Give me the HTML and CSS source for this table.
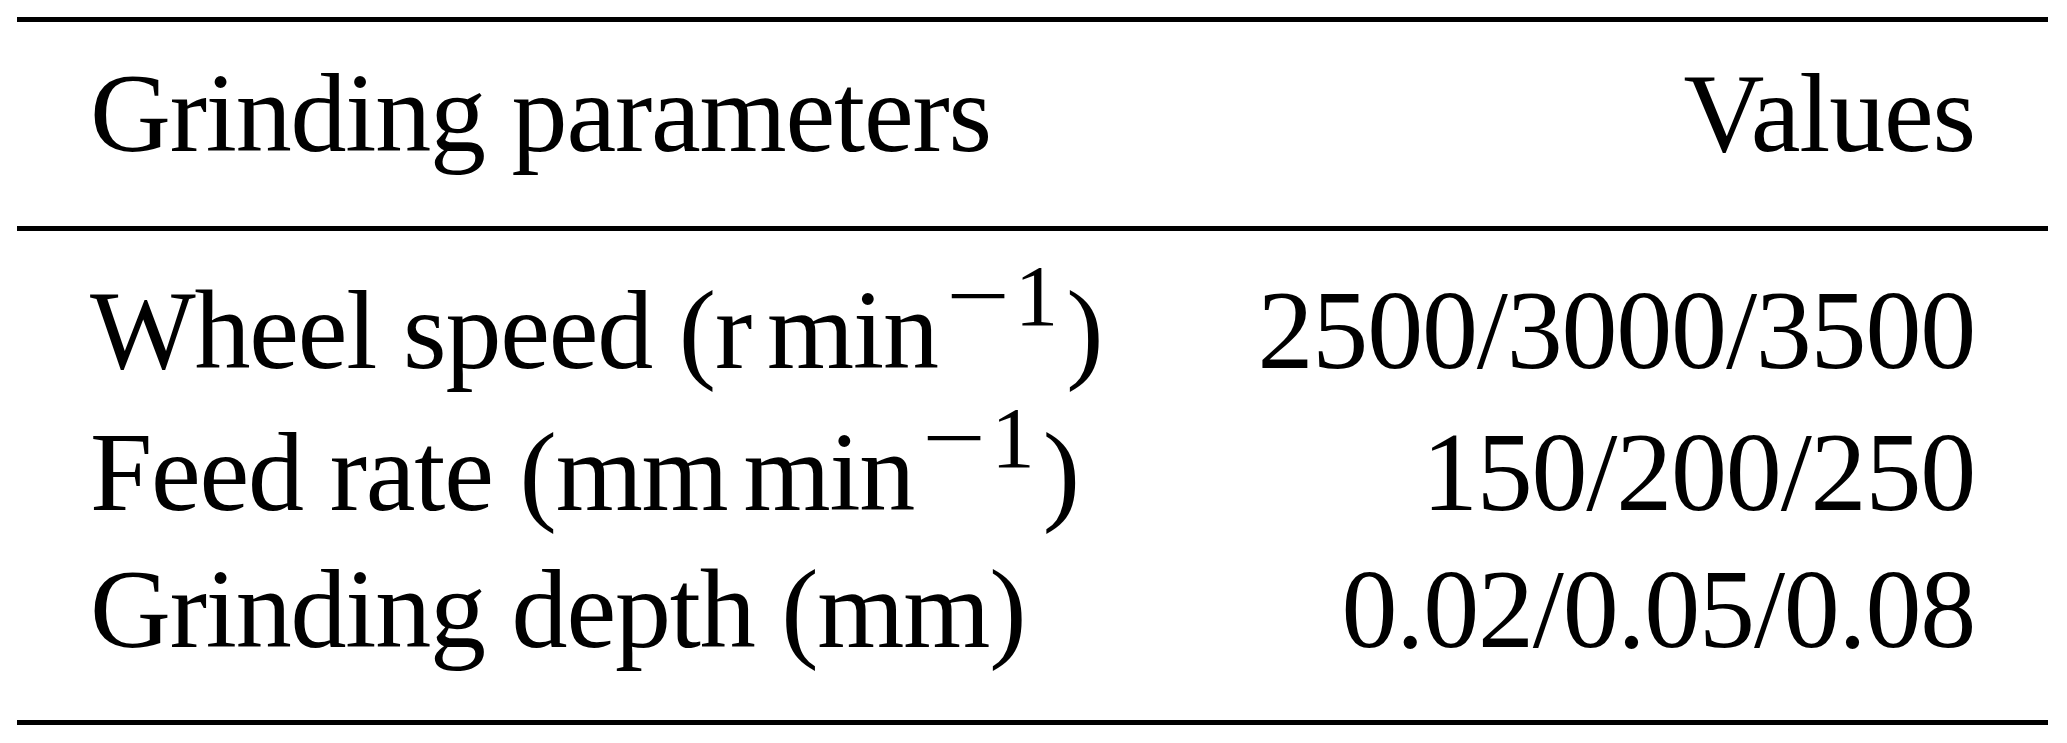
FILE: index.html
```html
<!DOCTYPE html>
<html lang="en">
<head>
<meta charset="utf-8">
<title>Grinding parameters</title>
<link rel="stylesheet" href="styles.css">
</head>
<body>
<div class="table">
  <div class="head">
    <span class="cell">Grinding parameters</span>
    <span class="cell">Values</span>
  </div>
  <div class="tbody">
    <div class="row r1">
      <span class="cell">Wheel speed (r<span class="thin"></span>min<sup class="sup"><span class="neg">−</span>1</sup>)</span>
      <span class="cell">2500/3000/3500</span>
    </div>
    <div class="row r2">
      <span class="cell">Feed rate (mm<span class="thin"></span>min<sup class="sup"><span class="neg">−</span>1</sup>)</span>
      <span class="cell">150/200/250</span>
    </div>
    <div class="row r3">
      <span class="cell">Grinding depth (mm)</span>
      <span class="cell">0.02/0.05/0.08</span>
    </div>
  </div>
</div>
</body>
</html>
```

FILE: styles.css
```css
html, body {
  margin: 0;
  padding: 0;
  background: #ffffff;
}

body {
  font-family: "Liberation Serif", "Times New Roman", serif;
  color: #000000;
}

.table {
  margin: 17px 0 0 17px;
  width: 2031px;
  border-top: 5px solid #000;
  border-bottom: 5px solid #000;
  font-size: 112px;
  letter-spacing: -1.2px;
}

.head {
  display: flex;
  justify-content: space-between;
  padding: 29px 73px 51px 73px;
  line-height: 124px;
  border-bottom: 5px solid #000;
}

.tbody {
  padding: 37px 0 49px 0;
}

.row {
  display: flex;
  justify-content: space-between;
  padding: 0 73px;
  line-height: 124px;
  white-space: nowrap;
}

.r1 { height: 142px; }
.r2 { height: 137px; }
.r3 { height: 124px; }

.thin {
  display: inline-block;
  width: 16px;
}

.sup {
  font-size: 87px;
  vertical-align: 43px;
  line-height: 0;
  letter-spacing: 0;
  margin-left: 8px;
  margin-right: 8px;
}

.neg {
  display: inline-block;
  transform: scaleX(1.3);
  transform-origin: left center;
  margin-right: 20px;
}
```
